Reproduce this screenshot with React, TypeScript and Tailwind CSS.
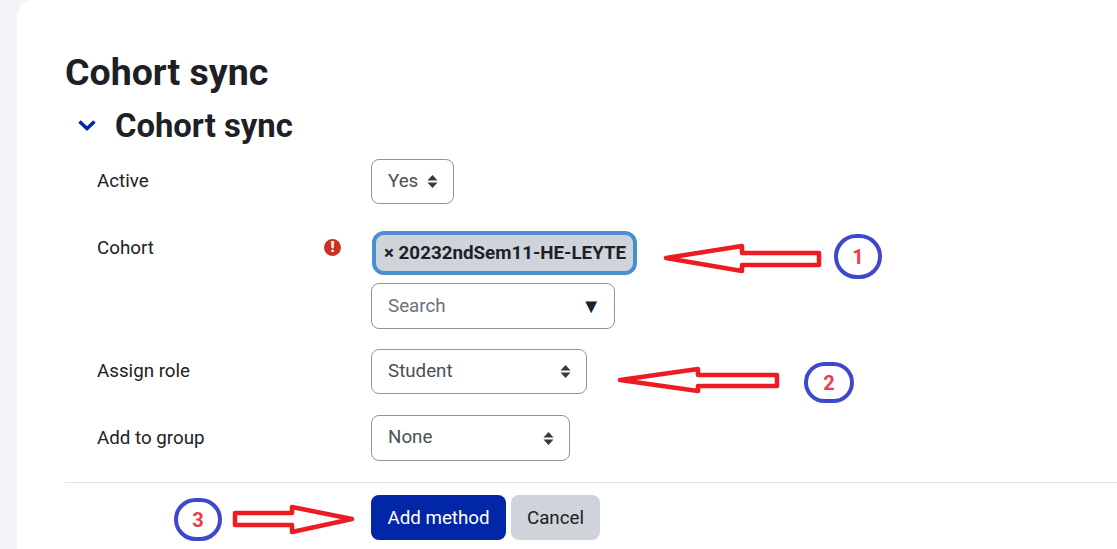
import type { ReactNode } from 'react';

function SortCaret() {
  return (
    <svg width="11" height="15" viewBox="0 0 11 15" className="shrink-0">
      <path d="M5.5 1 L10.5 6.5 L0.5 6.5 Z M5.5 14 L0.5 8.5 L10.5 8.5 Z" fill="#343a40" />
    </svg>
  );
}

function FakeSelect({ label, className }: { label: string; className: string }) {
  return (
    <div className={`flex items-center justify-between rounded-[8px] border border-[#8f959e] bg-white pl-4 pr-[15px] text-[18.75px] text-[#495057] ${className}`}>
      <span className="mt-[-1px]">{label}</span>
      <SortCaret />
    </div>
  );
}

function FormRow({ label, icon, className, labelClass, children }: { label: string; icon?: ReactNode; className?: string; labelClass: string; children: ReactNode }) {
  return (
    <div className={`flex ${className ?? ''}`}>
      <div className={`flex w-[306px] justify-between pl-[32px] pr-[30px] text-[18.75px] leading-[27px] text-[#1d2125] ${labelClass}`}>
        <span>{label}</span>
        {icon}
      </div>
      <div className="flex flex-col items-start">{children}</div>
    </div>
  );
}

function Badge({ n }: { n: string }) {
  return (
    <div className="flex h-full w-full items-center justify-center rounded-full border-[4px] border-[#3f48cc] text-[20px] font-bold text-[#ed3b48]">
      {n}
    </div>
  );
}

export default function App() {
  return (
    <div className="relative h-[549px] w-[1117px] overflow-hidden bg-[#f1f3f8] pl-[17px] font-['Roboto',sans-serif]">
      <div className="h-full rounded-tl-[16px] bg-white pl-[48px] pt-[48px]">
        <h2 className="text-[37.5px] font-bold leading-[48px] text-[#1d2125]">Cohort sync</h2>

        <div className="mt-[8px] flex h-[42px] items-center">
          <svg width="20" height="14" viewBox="0 0 20 14" className="ml-[12px]">
            <path d="M2.5 3.5 L10 10.5 L17.5 3.5" fill="none" stroke="#0226a8" strokeWidth="3.5" />
          </svg>
          <h3 className="ml-[18px] mt-[2px] text-[32.8px] font-bold leading-[42px] text-[#1d2125]">Cohort sync</h3>
        </div>

        <FormRow label="Active" className="mt-[13px]" labelClass="pt-[9px]">
          <FakeSelect label="Yes" className="h-[45px] w-[83px]" />
        </FormRow>

        <FormRow
          label="Cohort"
          className="mt-[27px]"
          labelClass="pt-[4px]"
          icon={
            <span className="mt-[4px] flex h-[17px] w-[17px] items-center justify-center rounded-full bg-[#ca3120] text-[15px] font-black leading-none text-white">
              !
            </span>
          }
        >
          <div className="ml-[1px] flex h-[44px] w-[265px] items-center rounded-[12px] border-[4px] border-[#4a90d0] bg-[#ced4da] pl-[8px] text-[18.75px] font-bold text-[#1d2125]">
            × 20232ndSem11-HE-LEYTE
          </div>
          <div className="mt-[8px] flex h-[46px] w-[244px] items-center justify-between rounded-[8px] border border-[#8f959e] bg-white pl-4 pr-[13px] text-[18.75px] text-[#6a737b]">
            <span>Search</span>
            <span className="text-[20px] leading-none text-[#1d2125]">▼</span>
          </div>
        </FormRow>

        <FormRow label="Assign role" className="mt-[20px]" labelClass="pt-[9px]">
          <FakeSelect label="Student" className="h-[45px] w-[216px]" />
        </FormRow>

        <FormRow label="Add to group" className="mt-[21px]" labelClass="pt-[10px]">
          <FakeSelect label="None" className="h-[46px] w-[199px]" />
        </FormRow>

        <div className="mt-[21px] h-px bg-[#dee2e6]" />

        <div className="ml-[306px] mt-[12px] flex gap-[5px]">
          <button className="h-[45px] w-[135px] rounded-[8px] bg-[#0226a8] pt-[1px] text-[18.75px] text-white">Add method</button>
          <button className="h-[45px] w-[89px] rounded-[8px] bg-[#ced4da] pt-[1px] text-[18.75px] text-[#1d2125]">Cancel</button>
        </div>
      </div>

      {/* hand drawn annotations */}
      <svg width="1117" height="549" className="pointer-events-none absolute left-0 top-0">
        <g fill="none" stroke="#ed1c24" strokeWidth="4.5" strokeLinejoin="round">
          <path d="M666 258 L742 246 L742 253 L819 253 L819 265 L742 265 L742 271 Z" />
          <path d="M620 380 L698 369 L698 375 L777 375 L777 386 L698 386 L698 391 Z" />
          <path d="M352 519 L292 507 L292 513 L235 513 L235 525 L292 525 L292 532 Z" />
        </g>
      </svg>
      <div className="absolute left-[834px] top-[234px] h-[45px] w-[48px]"><Badge n="1" /></div>
      <div className="absolute left-[804px] top-[362px] h-[41px] w-[50px]"><Badge n="2" /></div>
      <div className="absolute left-[174px] top-[498px] h-[43px] w-[48px]"><Badge n="3" /></div>
    </div>
  );
}
